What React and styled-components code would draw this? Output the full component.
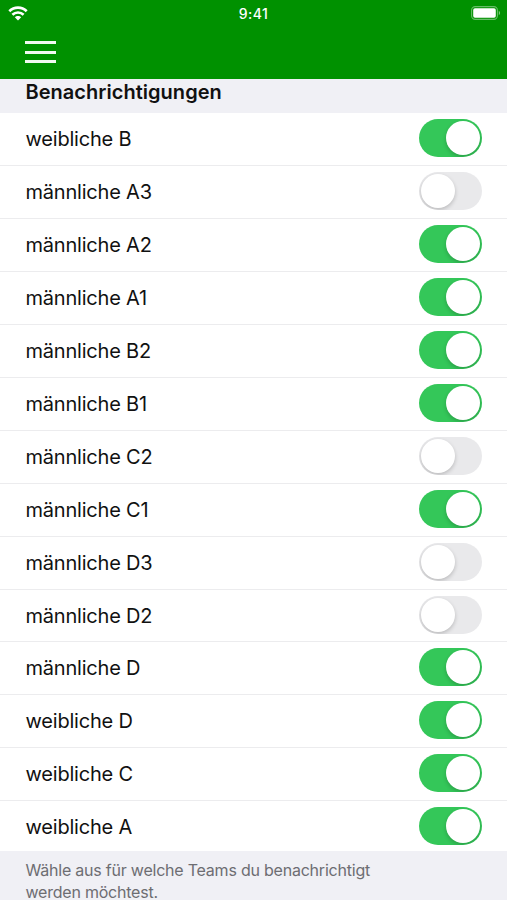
import React, { useState } from "react";
import styled, { createGlobalStyle } from "styled-components";

const TEAMS = [
  { name: "weibliche B", enabled: true },
  { name: "männliche A3", enabled: false },
  { name: "männliche A2", enabled: true },
  { name: "männliche A1", enabled: true },
  { name: "männliche B2", enabled: true },
  { name: "männliche B1", enabled: true },
  { name: "männliche C2", enabled: false },
  { name: "männliche C1", enabled: true },
  { name: "männliche D3", enabled: false },
  { name: "männliche D2", enabled: false },
  { name: "männliche D", enabled: true },
  { name: "weibliche D", enabled: true },
  { name: "weibliche C", enabled: true },
  { name: "weibliche A", enabled: true },
];

const WifiIcon = () => (
  <svg width="20" height="15" viewBox="0 0 20 15" fill="none" stroke="#fff">
    <path d="M1.3 5.2C6.2 0.5 13.8 0.5 18.7 5.2" strokeWidth="2.7" />
    <path d="M4.4 8.7C7.5 5.7 12.5 5.7 15.6 8.7" strokeWidth="2.6" />
    <path
      d="M10 14.4L6.8 11.2C8.5 9.5 11.5 9.5 13.2 11.2Z"
      fill="#fff"
      stroke="none"
    />
  </svg>
);

const BatteryIcon = () => (
  <svg width="30" height="14" viewBox="0 0 30 14">
    <rect
      x="0.6"
      y="0.6"
      width="25.8"
      height="12.8"
      rx="3.6"
      fill="none"
      stroke="#fff"
      strokeOpacity="0.4"
      strokeWidth="1.1"
    />
    <rect x="2.2" y="2.2" width="22.6" height="9.6" rx="1.8" fill="#fff" />
    <path d="M27.8 4.8C29.5 5.5 29.5 8.5 27.8 9.2Z" fill="#fff" opacity="0.5" />
  </svg>
);

const App = () => {
  const [teams, setTeams] = useState(TEAMS);

  const toggleHandler = (name) => {
    setTeams((prev) =>
      prev.map((team) =>
        team.name === name ? { ...team, enabled: !team.enabled } : team
      )
    );
  };

  return (
    <>
      <GlobalStyle />
      <Screen>
        <Header>
          <StatusBar>
            <WifiIcon />
            <Time>9:41</Time>
            <BatteryIcon />
          </StatusBar>
          <MenuButton aria-label="Menü">
            <span />
            <span />
            <span />
          </MenuButton>
        </Header>
        <SectionTitle>Benachrichtigungen</SectionTitle>
        <TeamList>
          {teams.map((team) => (
            <TeamRow key={team.name}>
              <TeamName>{team.name}</TeamName>
              <Switch
                role="switch"
                aria-label={team.name}
                aria-checked={team.enabled}
                $on={team.enabled}
                onClick={toggleHandler.bind(null, team.name)}
              >
                <Knob />
              </Switch>
            </TeamRow>
          ))}
        </TeamList>
        <Hint>Wähle aus für welche Teams du benachrichtigt werden möchtest.</Hint>
      </Screen>
    </>
  );
};

const GlobalStyle = createGlobalStyle`
  * {
    box-sizing: border-box;
  }

  body {
    margin: 0;
    background-color: #f0f0f5;
    font-family: Inter, "Liberation Sans", sans-serif;
  }
`;

const Screen = styled.div`
  width: 100%;
  height: 900px;
  overflow: hidden;
  background-color: #f0f0f5;
`;

const Header = styled.header`
  height: 79px;
  background-color: #009100;
`;

const StatusBar = styled.div`
  display: grid;
  grid-template-columns: 1fr auto 1fr;
  align-items: center;
  height: 26px;
  padding: 0 8px 0 8px;

  svg:last-child {
    justify-self: end;
    margin-right: -2px;
  }
`;

const Time = styled.span`
  color: #fff;
  font-size: 14px;
  font-weight: 500;
  letter-spacing: 0.4px;
`;

const MenuButton = styled.button`
  display: flex;
  flex-direction: column;
  justify-content: space-between;
  width: 31px;
  height: 22px;
  margin: 15px 0 0 25px;
  padding: 0;
  border: none;
  background: none;
  cursor: pointer;

  span {
    height: 3px;
    background-color: #f0faf0;
  }
`;

const SectionTitle = styled.h2`
  height: 34.4px;
  margin: 0;
  padding-left: 25.5px;
  color: #111;
  font-size: 20px;
  font-weight: 600;
  line-height: 26px;
  letter-spacing: 0.03px;
`;

const TeamList = styled.ul`
  margin: 0;
  padding: 0;
  list-style: none;
  background-color: #fff;
`;

const TeamRow = styled.li`
  display: flex;
  justify-content: space-between;
  align-items: flex-start;
  height: 52.92px;
  padding: 6px 25.5px 0 25.5px;
  border-bottom: 1px solid #ececee;

  &:last-child {
    height: 50px;
    border-bottom: none;
  }
`;

const TeamName = styled.span`
  color: #111;
  font-size: 20px;
  line-height: 40px;
  letter-spacing: -0.2px;
`;

const Switch = styled.button`
  display: flex;
  justify-content: ${(props) => (props.$on ? "flex-end" : "flex-start")};
  align-items: center;
  width: 62.5px;
  height: 38px;
  padding: 2px;
  border: none;
  border-radius: 19px;
  background-color: ${(props) => (props.$on ? "#34c759" : "#e9e9eb")};
  overflow: hidden;
  cursor: pointer;
`;

const Knob = styled.span`
  width: 34px;
  height: 34px;
  border-radius: 50%;
  background-color: #fff;
  box-shadow: 0 2px 4px rgba(0, 0, 0, 0.2);
`;

const Hint = styled.p`
  width: 400px;
  margin: 0;
  padding: 8px 0 0 25.5px;
  color: #6d6d72;
  font-size: 16px;
  line-height: 22px;
  letter-spacing: -0.22px;
`;

export default App;
